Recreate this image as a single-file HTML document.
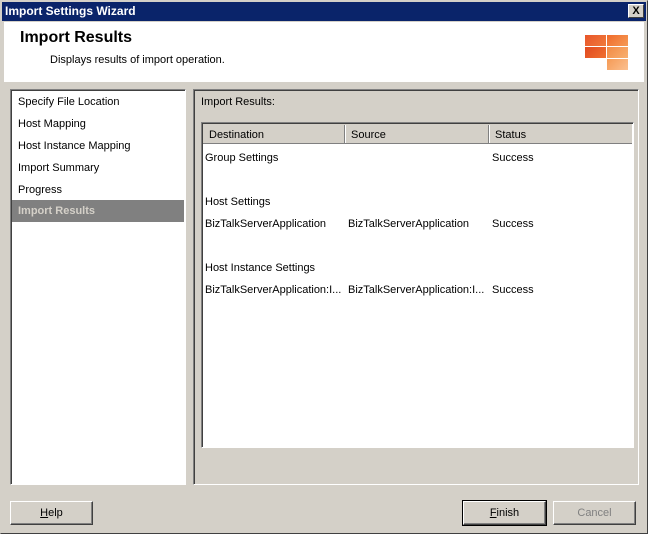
<!DOCTYPE html>
<html><head><style>
*{margin:0;padding:0;box-sizing:border-box}
body{width:648px;height:534px;background:#d4d0c8;font-family:"Liberation Sans",Arial,sans-serif;font-size:11px;color:#000;position:relative;overflow:hidden}
.a{position:absolute}
.win{left:0;top:0;width:648px;height:534px;border:1px solid;border-color:#d4d0c8 #404040 #404040 #d4d0c8}
.title{left:2px;top:2px;width:644px;height:19px;background:#0a246a;color:#fff;font-weight:bold;font-size:12px;line-height:19px;padding-left:3px}
.close{right:4px;top:4px;width:16px;height:14px;background:#d4d0c8;border:1px solid;border-color:#fff #404040 #404040 #fff;color:#000;font-size:11px;line-height:12px;text-align:center;font-weight:bold}
.hdr{left:4px;top:22px;width:640px;height:60px;background:#fff}
.sunk{border:1px solid;border-color:#808080 #fff #fff #808080;box-shadow:inset 1px 1px 0 #404040}
.li{left:18px;font-size:11px}
.btn{height:24px;width:83px;border:1px solid;border-color:#fff #404040 #404040 #fff;box-shadow:inset -1px -1px 0 #808080;text-align:center;line-height:23px;font-size:11px}
.sq{position:absolute;width:21px;height:11px}
</style></head><body>
<div class="a win"></div>
<div class="a title">Import Settings Wizard</div>
<div class="a close">X</div>
<div class="a hdr">
 <div class="a" style="left:16px;top:7px;font-size:16px;font-weight:bold">Import Results</div>
 <div class="a" style="left:46px;top:32px;font-size:11px">Displays results of import operation.</div>
 <div class="sq" style="left:581px;top:13px;background:linear-gradient(135deg,#e8552a,#f07a3a)"></div>
 <div class="sq" style="left:603px;top:13px;background:linear-gradient(135deg,#f06a2a,#f59a55)"></div>
 <div class="sq" style="left:581px;top:25px;background:linear-gradient(135deg,#e04a20,#f07030)"></div>
 <div class="sq" style="left:603px;top:25px;background:linear-gradient(135deg,#f28a45,#f8b070)"></div>
 <div class="sq" style="left:603px;top:37px;background:linear-gradient(135deg,#f59a55,#fbc090)"></div>
</div>
<div class="a sunk" style="left:10px;top:89px;width:176px;height:396px;background:#fff"></div>
<div class="a li" style="top:96px">Specify File Location</div>
<div class="a li" style="top:118px">Host Mapping</div>
<div class="a li" style="top:140px">Host Instance Mapping</div>
<div class="a li" style="top:162px">Import Summary</div>
<div class="a li" style="top:184px">Progress</div>
<div class="a" style="left:12px;top:200px;width:172px;height:22px;background:#808080;color:#d4d0c8;font-weight:bold;padding-left:6px;line-height:22px">Import Results</div>
<div class="a sunk" style="left:193px;top:89px;width:446px;height:396px"></div>
<div class="a" style="left:201px;top:96px">Import Results:</div>
<div class="a sunk" style="left:201px;top:122px;width:433px;height:326px;background:#fff"></div>
<div class="a" style="left:203px;top:124px;width:429px;height:20px;background:#d4d0c8;border-bottom:1px solid #808080"></div>
<div class="a" style="left:344px;top:125px;width:1px;height:18px;background:#808080"></div><div class="a" style="left:345px;top:125px;width:1px;height:18px;background:#fff"></div>
<div class="a" style="left:488px;top:125px;width:1px;height:18px;background:#808080"></div><div class="a" style="left:489px;top:125px;width:1px;height:18px;background:#fff"></div>
<div class="a" style="left:209px;top:129px">Destination</div>
<div class="a" style="left:351px;top:129px">Source</div>
<div class="a" style="left:495px;top:129px">Status</div>
<div class="a" style="left:205px;top:152px">Group Settings</div><div class="a" style="left:492px;top:152px">Success</div>
<div class="a" style="left:205px;top:196px">Host Settings</div>
<div class="a" style="left:205px;top:218px">BizTalkServerApplication</div><div class="a" style="left:348px;top:218px">BizTalkServerApplication</div><div class="a" style="left:492px;top:218px">Success</div>
<div class="a" style="left:205px;top:262px">Host Instance Settings</div>
<div class="a" style="left:205px;top:284px">BizTalkServerApplication:I...</div><div class="a" style="left:348px;top:284px">BizTalkServerApplication:I...</div><div class="a" style="left:492px;top:284px">Success</div>
<div class="a btn" style="left:10px;top:501px"><u>H</u>elp</div>
<div class="a btn" style="left:463px;top:501px;outline:1px solid #000"><u>F</u>inish</div>
<div class="a btn" style="left:553px;top:501px;color:#808080">Cancel</div>
</body></html>
